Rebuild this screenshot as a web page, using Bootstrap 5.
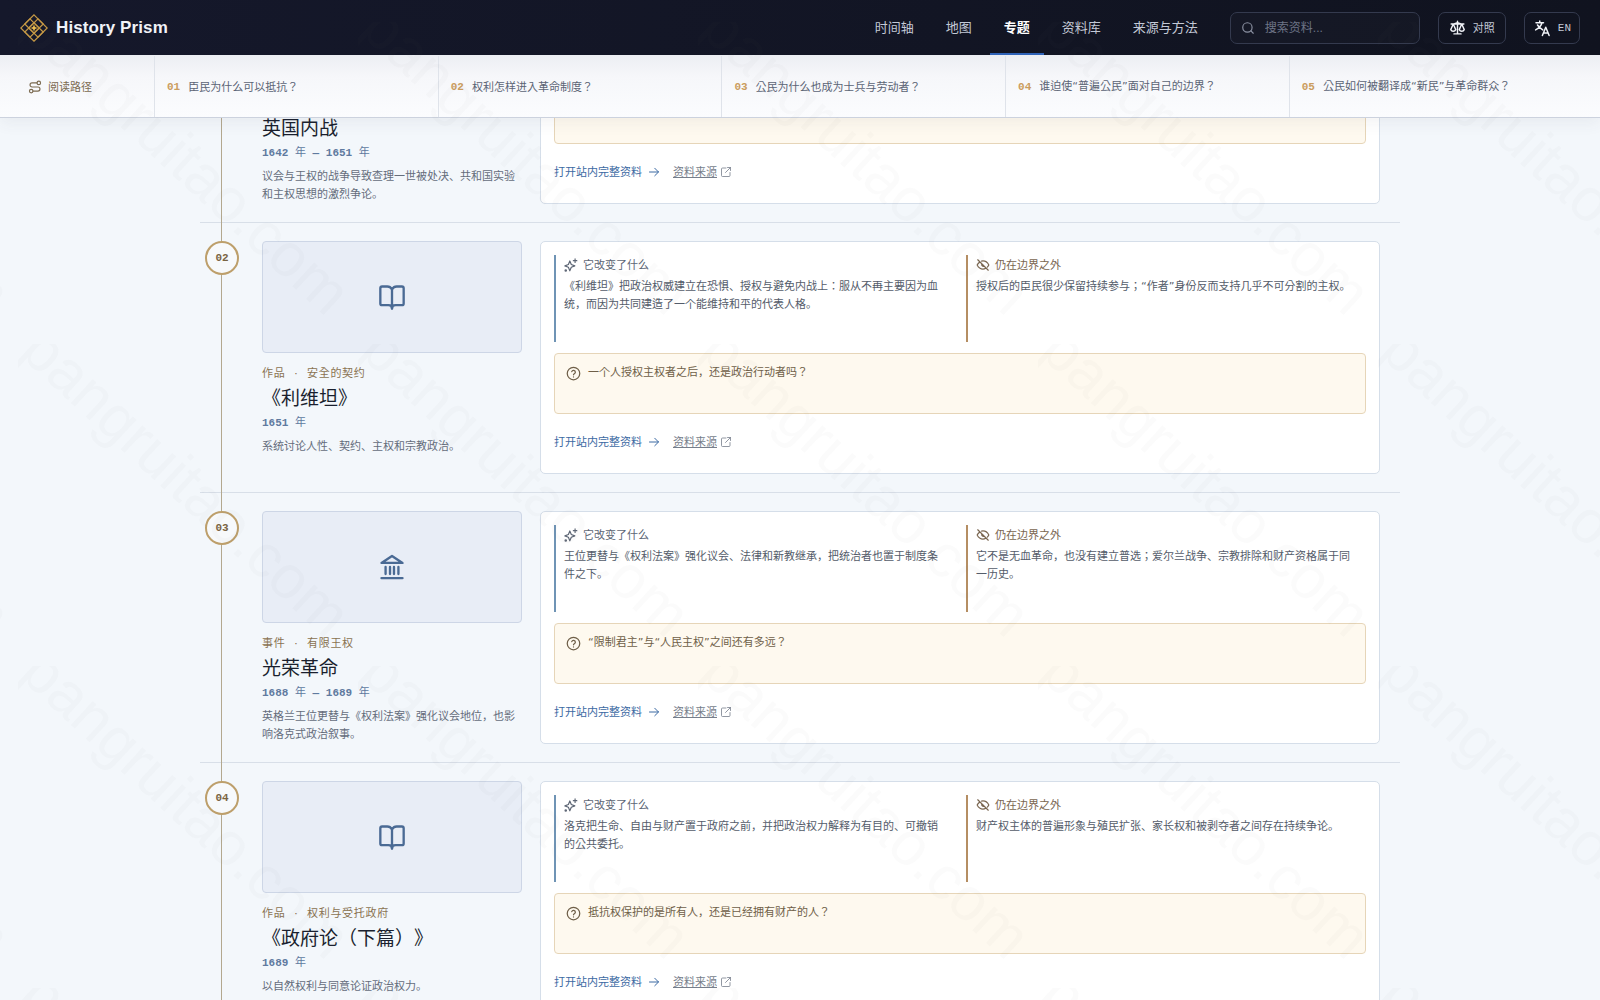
<!DOCTYPE html>
<html lang="en">

<head>
    <meta charset="UTF-8">
    <meta name="viewport" content="width=device-width, initial-scale=1.0">
    <title>History Prism</title>
    <link href="https://cdn.jsdelivr.net/npm/bootstrap@5.3.0/dist/css/bootstrap.min.css" rel="stylesheet">
    <style>
        html,
        body {
            height: 100%;
            overflow: hidden;
        }

        body {
            font-family: "Open Sans", "Noto Sans CJK KR", sans-serif;
            font-size: 11px;
            line-height: 18px;
            background: #f3f7fb;
            color: #4f5866;
        }

        .qm {
            font-family: "DejaVu Sans", sans-serif;
        }

        .ico {
            fill: none;
            stroke: currentColor;
            stroke-width: 2;
            stroke-linecap: round;
            stroke-linejoin: round;
            flex: none;
        }

        .top-bar {
            height: 55px;
            padding: 0 20px;
            background: linear-gradient(90deg, #15182b, #10131f);
            position: relative;
            z-index: 3;
        }

        .brand-name {
            font-family: "Liberation Sans", sans-serif;
            font-size: 17px;
            font-weight: 700;
            line-height: 28px;
            color: #f1f3f8;
            letter-spacing: .1px;
        }

        .top-bar .navbar-brand {
            padding: 0;
            margin: 0;
            gap: 8px;
        }

        .top-bar .navbar-nav {
            gap: 4px;
            margin-right: 18px;
            height: 55px;
        }

        .navbar-expand .navbar-nav .nav-link {
            font-size: 13px;
            line-height: 55px;
            padding: 0 14px;
            color: #c3c9d6;
        }

        .navbar-expand .navbar-nav .nav-link.active {
            color: #fff;
            font-weight: 700;
            box-shadow: inset 0 -2px 0 #2f63b8;
        }

        .search-box {
            width: 190px;
            height: 32px;
            padding: 0 12px 0 10px;
            gap: 10px;
            border: 1px solid #343a4e;
            border-radius: 7px;
            color: #8b91a2;
            background: rgba(255, 255, 255, .02);
        }

        .search-box .form-control {
            background: transparent;
            border: 0;
            padding: 0;
            font-family: "Liberation Sans", "Noto Sans CJK KR", sans-serif;
            font-size: 12px;
            color: #c3c9d6;
            box-shadow: none;
        }

        .search-box .form-control::placeholder {
            color: #6d7486;
        }

        .tool-btn {
            height: 32px;
            padding: 0 10px;
            gap: 7px;
            border: 1px solid #343a4e;
            border-radius: 7px;
            font-size: 11px;
            line-height: 20px;
            color: #c3c9d6;
            margin-left: 18px;
        }

        .tool-btn.lang-btn {
            padding: 0 8px;
            margin-left: 18px;
        }

        .tool-btn:hover {
            color: #fff;
            border-color: #4a5166;
        }

        .tool-btn .ico {
            color: #f1f3f8;
        }

        .en-label {
            font-family: "Liberation Mono", monospace;
        }

        .path-strip {
            height: 63px;
            padding-top: 1px;
            background: linear-gradient(180deg, #eceef3, #f6f7fa 35%, #fbfcfe);
            border-bottom: 1px solid #ccd2de;
            box-shadow: 0 6px 14px rgba(60, 70, 90, .06);
            position: relative;
            z-index: 2;
        }

        .path-label {
            width: 155px;
            padding-left: 28px;
            gap: 6px;
            color: #7b6a50;
            border-right: 1px solid #dfe3ea;
        }

        .path-step {
            width: 283.7px;
            padding-left: 12px;
            gap: 8px;
            color: #5b6475;
            border-right: 1px solid #dfe3ea;
            text-decoration: none;
        }

        .path-step:last-child {
            flex: 1;
            border-right: 0;
        }

        .step-no {
            font-family: "Liberation Mono", monospace;
            font-weight: 700;
            color: #cb9d5e;
        }

        .scroll-view {
            height: calc(100vh - 118px);
            overflow: hidden;
        }

        .timeline {
            width: 1200px;
            margin: -165px auto 0;
            position: relative;
        }

        .timeline::before {
            content: "";
            position: absolute;
            left: 21px;
            top: 0;
            bottom: 0;
            width: 1px;
            background: #b3a88f;
        }

        .entry {
            display: grid;
            grid-template-columns: 34px 260px 840px;
            column-gap: 23px;
            padding: 18px 20px 18px 5px;
            border-bottom: 1px solid #d8dfe8;
        }

        .entry-no {
            width: 34px;
            height: 34px;
            border: 2px solid #bd9f6b;
            border-radius: 50%;
            background: #f7f9fb;
            font-family: "Liberation Mono", monospace;
            font-weight: 700;
            color: #7a6442;
            position: relative;
        }

        .media-box {
            height: 112px;
            background: #e8edf6;
            border: 1px solid #cdd6e6;
            border-radius: 4px;
            color: #4a6a94;
        }

        .entry-meta {
            min-height: 18px;
            margin-top: 11px;
            gap: 9px;
            color: #8a7352;
            letter-spacing: .7px;
        }

        .entry-title {
            font-family: "Open Sans", "Noto Sans CJK KR", sans-serif;
            font-size: 19px;
            line-height: 28px;
            font-weight: 400;
            color: #1a1f2e;
            margin: 2px 0 2px;
            text-spacing-trim: space-all;
        }

        .entry-year {
            font-family: "Liberation Mono", "Noto Sans CJK KR", monospace;
            font-weight: 700;
            color: #5f7a9f;
        }

        .entry-year .yr {
            font-weight: 400;
        }

        .entry-desc {
            margin: 5px 0 0;
            color: #656d7b;
        }

        .insight-card {
            margin-left: -5px;
            margin-right: 5px;
            height: 233px;
            border: 1px solid #d5dee9;
            border-radius: 5px;
            background: #fff;
        }

        .insight-card .card-body {
            padding: 13px;
        }

        .insight-cols {
            display: grid;
            grid-template-columns: 1fr 1fr;
            column-gap: 12px;
        }

        .insight-col {
            min-height: 87px;
            padding: 0 10px 0 8px;
            border-left: 2px solid #6f94b5;
        }

        .insight-col.outside {
            border-left-color: #b58e63;
        }

        .insight-head {
            gap: 5px;
            height: 20px;
            margin-bottom: 2px;
            color: #5d6675;
        }

        .outside .insight-head {
            color: #7a6650;
        }

        .insight-col p {
            margin: 0;
            color: #545c6a;
        }

        .ask-box {
            height: 61px;
            margin: 11px 0 0;
            padding: 9px 11px;
            gap: 7px;
            background: #fef9ef;
            border: 1px solid #e6d5b8;
            border-radius: 4px;
            color: #6f5f48;
        }

        .ask-box .ico {
            margin-top: 3px;
        }

        .link-row {
            margin-top: 19px;
            gap: 13px;
        }

        .open-link {
            gap: 6px;
            color: #3c6aa3;
            text-decoration: none;
        }

        .src-link {
            gap: 3px;
            color: #767e8b;
            text-decoration: none;
        }

        .src-link span {
            text-decoration: underline;
        }

        .src-link .ico {
            stroke-width: 1.600;
        }

        .mark-layer {
            position: fixed;
            inset: 0;
            width: 100%;
            height: 100%;
            pointer-events: none;
            z-index: 10;
        }

        .mark-layer text {
            font-family: "Liberation Sans", sans-serif;
            font-size: 61px;
            fill: rgba(95, 105, 125, .028);
        }
    </style>
</head>

<body>
    <svg width="0" height="0" class="position-absolute">
        <symbol id="i-book" viewBox="0 0 24 24">
            <path d="M12 5.5Q10.5 3 8 3H3.500a1.500 1.500 0 0 0-1.500 1.500V17.500A1.500 1.500 0 0 0 3.500 19H9Q12 19 12 22Q12 19 15 19H20.500A1.500 1.500 0 0 0 22 17.500V4.500A1.500 1.500 0 0 0 20.500 3H16Q13.500 3 12 5.500ZM12 5.500V22" />
        </symbol>
        <symbol id="i-bank" viewBox="0 0 24 24">
            <path d="M3 21.500H21M3 8.500H21L12 2.500ZM6.500 12V18M10.300 12V18M13.700 12V18M17.500 12V18" />
        </symbol>
        <symbol id="i-spark" viewBox="0 0 24 24">
            <path d="M10 5 12.500 11 18.500 13.500 12.500 16 10 22 7.500 16 1.500 13.500 7.500 11ZM19 1.500v6M16 4.500h6" />
            <circle cx="3" cy="21.500" r="1.200" />
        </symbol>
        <symbol id="i-eyeoff" viewBox="0 0 24 24">
            <path d="M3 3 21 21M9.500 5.300Q10.700 5 12 5c4.500 0 8 3 10 7q-1 2-2.600 3.700M16.500 17.500Q14.500 19 12 19c-4.500 0-8-3-10-7q1.200-2.700 4.500-5.200M10 10a3 3 0 0 0 4 4" />
        </symbol>
        <symbol id="i-help" viewBox="0 0 24 24">
            <circle cx="12" cy="12" r="10" />
            <path d="M9.200 9a3 3 0 0 1 5.800 1c0 2-3 2.500-3 4M12 17.500v.010" />
        </symbol>
        <symbol id="i-arrow" viewBox="0 0 24 24">
            <path d="M3 12H21M13.500 4.500 21 12l-7.500 7.500" />
        </symbol>
        <symbol id="i-ext" viewBox="0 0 24 24">
            <path d="M12 4H5a2 2 0 0 0-2 2V19a2 2 0 0 0 2 2H18a2 2 0 0 0 2-2V13M15 3h6v6M21 3 11 13" />
        </symbol>
        <symbol id="i-search" viewBox="0 0 24 24">
            <circle cx="11" cy="11" r="8" />
            <path d="M21 21 17 17" />
        </symbol>
        <symbol id="i-route" viewBox="0 0 24 24">
            <circle cx="5.500" cy="19" r="3" />
            <circle cx="18.500" cy="5" r="3" />
            <path d="M8.500 19H17a3.500 3.500 0 0 0 0-7H7a3.500 3.500 0 0 1 0-7H15.500" />
        </symbol>
        <symbol id="i-scale" viewBox="0 0 24 24">
            <path d="M12 3V21M7 21H17M3 7H21M12 5 7 7M12 5l5 2M6 7 2.500 15a3.800 3.800 0 0 0 7 0ZM18 7l-3.500 8a3.800 3.800 0 0 0 7 0Z" />
        </symbol>
        <symbol id="i-lang" viewBox="0 0 24 24">
            <path d="M4 5h10M9 2.500V5M12 5Q10.500 11 3.500 14.500M6 8q2.500 4 7 6.500M12.500 22 17 11l4.500 11M14 18.500h6" />
        </symbol>
    </svg>

    <nav class="navbar navbar-expand top-bar">
        <a class="navbar-brand d-flex align-items-center" href="#">
            <svg width="28" height="28" viewBox="0 0 28 28" fill="none" stroke="#c79a45" stroke-width="1.200">
                <path d="M14 .8 23.200 10 14 19.200 4.800 10ZM14 8.800 23.200 18 14 27.200 4.800 18Z" />
                <path d="M10 4.800 19.200 14 10 23.200.8 14ZM18 4.800 27.200 14 18 23.200 8.800 14Z" />
                <path d="M14 10.500 15 13 17.500 14 15 15 14 17.500 13 15 10.500 14 13 13Z" fill="#f2c14e" stroke="none" />
            </svg>
            <span class="brand-name">History Prism</span>
        </a>
        <div class="d-flex align-items-center ms-auto">
            <ul class="navbar-nav">
                <li class="nav-item"><a class="nav-link" href="#">时间轴</a></li>
                <li class="nav-item"><a class="nav-link" href="#">地图</a></li>
                <li class="nav-item"><a class="nav-link active" href="#">专题</a></li>
                <li class="nav-item"><a class="nav-link" href="#">资料库</a></li>
                <li class="nav-item"><a class="nav-link" href="#">来源与方法</a></li>
            </ul>
            <div class="search-box d-flex align-items-center">
                <svg class="ico" width="14" height="14"><use href="#i-search" /></svg>
                <input type="text" class="form-control" placeholder="搜索资料...">
            </div>
            <a class="btn tool-btn d-flex align-items-center" href="#">
                <svg class="ico" width="17" height="17"><use href="#i-scale" /></svg>对照
            </a>
            <a class="btn tool-btn lang-btn d-flex align-items-center" href="#">
                <svg class="ico" width="18" height="18"><use href="#i-lang" /></svg><span class="en-label">EN</span>
            </a>
        </div>
    </nav>

    <div class="path-strip d-flex">
        <div class="path-label d-flex align-items-center">
            <svg class="ico" width="14" height="14" stroke-width="2"><use href="#i-route" /></svg>阅读路径
        </div>
        <a class="path-step d-flex align-items-center" href="#"><span class="step-no">01</span><span>臣民为什么可以抵抗？</span></a>
        <a class="path-step d-flex align-items-center" href="#"><span class="step-no">02</span><span>权利怎样进入革命制度？</span></a>
        <a class="path-step d-flex align-items-center" href="#"><span class="step-no">03</span><span>公民为什么也成为士兵与劳动者？</span></a>
        <a class="path-step d-flex align-items-center" href="#"><span class="step-no">04</span><span>谁迫使<span class="qm">“</span>普遍公民<span class="qm">”</span>面对自己的边界？</span></a>
        <a class="path-step d-flex align-items-center" href="#"><span class="step-no">05</span><span>公民如何被翻译成<span class="qm">“</span>新民<span class="qm">”</span>与革命群众？</span></a>
    </div>

    <div class="scroll-view">
        <div class="timeline" id="timeline"></div>
    </div>

    <svg class="mark-layer">
        <defs>
            <pattern id="markTile" width="340" height="322" x="18" y="22" patternUnits="userSpaceOnUse">
                <text transform="translate(0,10) rotate(42.800)">pangruitao.com</text>
            </pattern>
        </defs>
        <rect width="100%" height="100%" fill="url(#markTile)" />
    </svg>

    <script src="https://cdn.jsdelivr.net/npm/bootstrap@5.3.0/dist/js/bootstrap.bundle.min.js"></script>
    <script>
        const entries = [
            {
                no: "01", icon: "i-bank", kind: "", topic: "", title: "英国内战",
                year: "1642 <span class='yr'>年</span> — 1651 <span class='yr'>年</span>",
                desc: "议会与王权的战争导致查理一世被处决、共和国实验和主权思想的激烈争论。",
                changed: "", outside: "", ask: ""
            },
            {
                no: "02", icon: "i-book", kind: "作品", topic: "安全的契约", title: "《利维坦》",
                year: "1651 <span class='yr'>年</span>",
                desc: "系统讨论人性、契约、主权和宗教政治。",
                changed: "《利维坦》把政治权威建立在恐惧、授权与避免内战上：服从不再主要因为血统，而因为共同建造了一个能维持和平的代表人格。",
                outside: "授权后的臣民很少保留持续参与；“作者”身份反而支持几乎不可分割的主权。",
                ask: "一个人授权主权者之后，还是政治行动者吗？"
            },
            {
                no: "03", icon: "i-bank", kind: "事件", topic: "有限王权", title: "光荣革命",
                year: "1688 <span class='yr'>年</span> — 1689 <span class='yr'>年</span>",
                desc: "英格兰王位更替与《权利法案》强化议会地位，也影响洛克式政治叙事。",
                changed: "王位更替与《权利法案》强化议会、法律和新教继承，把统治者也置于制度条件之下。",
                outside: "它不是无血革命，也没有建立普选；爱尔兰战争、宗教排除和财产资格属于同一历史。",
                ask: "“限制君主”与“人民主权”之间还有多远？"
            },
            {
                no: "04", icon: "i-book", kind: "作品", topic: "权利与受托政府", title: "《政府论（下篇）》",
                year: "1689 <span class='yr'>年</span>",
                desc: "以自然权利与同意论证政治权力。",
                changed: "洛克把生命、自由与财产置于政府之前，并把政治权力解释为有目的、可撤销的公共委托。",
                outside: "财产权主体的普遍形象与殖民扩张、家长权和被剥夺者之间存在持续争论。",
                ask: "抵抗权保护的是所有人，还是已经拥有财产的人？"
            }
        ];

        function wideQuotes(text) {
            return text.replace(/[“”]/g, m => `<span class="qm">${m}</span>`);
        }

        function renderEntries() {
            const box = document.getElementById("timeline");
            box.innerHTML = entries.map(e => `
                <article class="entry">
                    <div class="entry-no d-flex align-items-center justify-content-center">${e.no}</div>
                    <div class="entry-main">
                        <div class="media-box d-flex align-items-center justify-content-center">
                            <svg class="ico" width="28" height="28"><use href="#${e.icon}" /></svg>
                        </div>
                        <div class="entry-meta d-flex">${e.kind ? `<span>${e.kind}</span><span>·</span><span>${e.topic}</span>` : ""}</div>
                        <h3 class="entry-title">${e.title}</h3>
                        <div class="entry-year">${e.year}</div>
                        <p class="entry-desc">${e.desc}</p>
                    </div>
                    <div class="card insight-card">
                        <div class="card-body">
                            <div class="insight-cols">
                                <div class="insight-col">
                                    <div class="insight-head d-flex align-items-center">
                                        <svg class="ico" width="14" height="14"><use href="#i-spark" /></svg>它改变了什么
                                    </div>
                                    <p>${wideQuotes(e.changed)}</p>
                                </div>
                                <div class="insight-col outside">
                                    <div class="insight-head d-flex align-items-center">
                                        <svg class="ico" width="14" height="14"><use href="#i-eyeoff" /></svg>仍在边界之外
                                    </div>
                                    <p>${wideQuotes(e.outside)}</p>
                                </div>
                            </div>
                            <div class="alert ask-box d-flex align-items-start">
                                <svg class="ico" width="15" height="15"><use href="#i-help" /></svg><span>${wideQuotes(e.ask)}</span>
                            </div>
                            <div class="link-row d-flex">
                                <a class="open-link d-flex align-items-center" href="#">打开站内完整资料<svg class="ico" width="12" height="12"><use href="#i-arrow" /></svg></a>
                                <a class="src-link d-flex align-items-center" href="#"><span>资料来源</span><svg class="ico" width="12" height="12"><use href="#i-ext" /></svg></a>
                            </div>
                        </div>
                    </div>
                </article>`).join("");
        }

        renderEntries();
    </script>
</body>

</html>
